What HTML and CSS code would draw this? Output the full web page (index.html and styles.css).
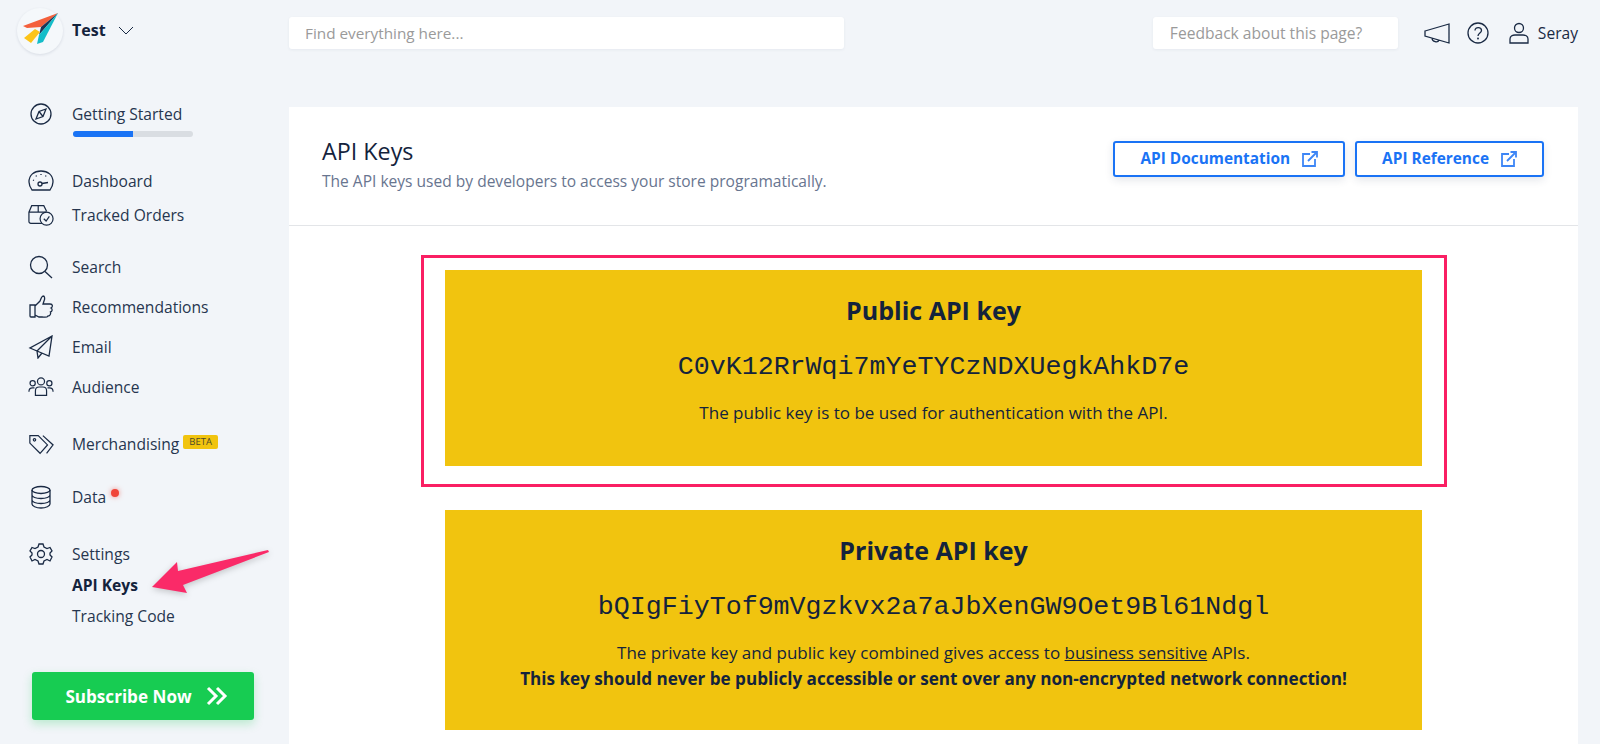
FILE: index.html
```html
<!doctype html>
<html>
<head>
  <title>API Keys</title>
  <link rel="stylesheet" href="styles.css">
</head>
<body>
  <header class="topbar">
    <div class="brand">
      <div class="logo">
        <svg width="38" height="38" viewBox="0 0 38 38">
          <path d="M2 14 L37 1 L20 15 L6 16 Z" fill="#f4603c"/>
          <path d="M37 1 L20 15 L18 23 Z" fill="#1d3557"/>
          <path d="M37 1 L18 23 L16 32 L22 30 Z" fill="#14bdc9"/>
          <path d="M3 26 L14 17 L19 20 L10 31 Z" fill="#fcc419"/>
        </svg>
      </div>
      <span class="brand-name">Test</span>
      <svg class="chevron" width="16" height="9" viewBox="0 0 16 9"><path d="M1 1 L8 8 L15 1"/></svg>
    </div>
    <div class="search-box">Find everything here...</div>
    <div class="top-right">
      <div class="feedback-box">Feedback about this page?</div>
      <svg class="ico mega" width="26" height="21" viewBox="0 0 26 21">
        <path d="M1 8 L25 1 V20 L1 13 Z M1 8 V13 M8 15 C8 19 14 20 15 17"/>
      </svg>
      <svg class="ico help" width="22" height="22" viewBox="0 0 22 22">
        <circle cx="11" cy="11" r="10"/>
        <path d="M8 8.500 C8 4.500 14.500 5 14.500 8.500 C14.500 11 11 11 11 14"/>
        <circle cx="11" cy="16.500" r="0.400"/>
      </svg>
      <div class="user">
        <svg class="ico" width="20" height="22" viewBox="0 0 20 22">
          <circle cx="10" cy="6" r="4.500"/>
          <path d="M1 21 V17 C1 14 4 13 6 13 H14 C16 13 19 14 19 17 V21 Z"/>
        </svg>
        <span>Seray</span>
      </div>
    </div>
  </header>

  <div class="layout">
    <aside class="sidebar">
      <nav class="side-group first">
        <a class="side-item">
          <svg class="ico side-ico" width="26" height="24" viewBox="0 0 26 24">
            <circle cx="13" cy="12" r="10"/>
            <path d="M18 7 L15 14.500 L8 17 L11 9.500 Z M11 9.500 L15 14.500"/>
          </svg>
          Getting Started
        </a>
        <div class="progress"><div class="progress-fill"></div></div>
      </nav>

      <nav class="side-group tight">
        <a class="side-item">
          <svg class="ico side-ico" width="26" height="24" viewBox="0 0 26 24">
            <path d="M4 21 C2 18 1 16 1 13 C1 6 6 2 13 2 C20 2 25 6 25 13 C25 16 24 18 22 21 Z"/>
            <circle cx="12" cy="15" r="2"/>
            <path d="M14 14.500 L20 13.500 M5 11 L6 11.500 M8 6.500 L8.500 7.500 M13 5 V6 M18 6.500 L17.500 7.500"/>
          </svg>
          Dashboard
        </a>
        <a class="side-item">
          <svg class="ico side-ico" width="28" height="24" viewBox="0 0 28 24">
            <path d="M15 21 H3 C2 21 1 20 1 19 V9 L4 2 H17 L20 8 M1 9 H20 M11 2 V9"/>
            <circle cx="20" cy="16" r="7"/>
            <path d="M17 16 L19.500 18.500 L23 13.500"/>
          </svg>
          Tracked Orders
        </a>
      </nav>

      <nav class="side-group after-tight">
        <a class="side-item">
          <svg class="ico side-ico" width="26" height="24" viewBox="0 0 26 24">
            <circle cx="11" cy="10" r="8.500"/>
            <path d="M17 16.500 L24 23"/>
          </svg>
          Search
        </a>
        <a class="side-item">
          <svg class="ico side-ico" width="26" height="24" viewBox="0 0 26 24">
            <path d="M2 10 H7 V22 H3 C2 22 2 21 2 21 Z M7 11 L12 6 C13 4 13 2 15 1 C17 1 17 4 16 6 L15 9 H22 C25 9 25 12 23 13 C25 14 24 17 22.500 17 C23 19 22 21 20 21 C19 23 16 22 14 22 H11 L7 20"/>
          </svg>
          Recommendations
        </a>
        <a class="side-item">
          <svg class="ico side-ico" width="26" height="24" viewBox="0 0 26 24">
            <path d="M24 1 L2 13 L9 16 L21 21 Z M24 1 L9 16 L10 23 L14 18"/>
          </svg>
          Email
        </a>
        <a class="side-item">
          <svg class="ico side-ico" width="28" height="22" viewBox="0 0 28 22">
            <circle cx="14" cy="5" r="3.800"/>
            <circle cx="5" cy="7" r="2.800"/>
            <circle cx="23" cy="7" r="2.800"/>
            <path d="M8 20 V15 C8 12 10 11 12 11 H16 C18 11 20 12 20 15 V20 Z M1 16 C1 13 2 12 5 12 H7 M27 16 C27 13 26 12 23 12 H21"/>
          </svg>
          Audience
        </a>
      </nav>

      <nav class="side-group merch-group">
        <a class="side-item">
          <svg class="ico side-ico" width="28" height="24" viewBox="0 0 28 24">
            <path d="M2 3 H11 L21 13 L13 22 L2 11 Z M16 3 L27 13 L20 22"/>
            <circle cx="7" cy="7.500" r="1.300"/>
          </svg>
          <span>Merchandising</span>
          <span class="beta">BETA</span>
        </a>
      </nav>

      <nav class="side-group data-group">
        <a class="side-item">
          <svg class="ico side-ico" width="26" height="24" viewBox="0 0 26 24">
            <ellipse cx="13" cy="5" rx="9" ry="3.500"/>
            <path d="M4 5 V19 C4 21 8 23 13 23 C18 23 22 21 22 19 V5 M4 10 C4 12 8 13.500 13 13.500 C18 13.500 22 12 22 10 M4 15 C4 17 8 18.500 13 18.500 C18 18.500 22 17 22 15"/>
          </svg>
          <span class="dotted">Data<i class="dot"></i></span>
        </a>
      </nav>

      <nav class="side-group settings-group">
        <a class="side-item">
          <svg class="ico side-ico" width="26" height="24" viewBox="0 0 26 24">
            <circle cx="13" cy="12" r="3.500"/>
            <path d="M11 2 H15 L16 5 L19 6.500 L22 5.500 L24 9 L22 11 V13 L24 15 L22 19 L19 17.500 L16 19 L15 22 H11 L10 19 L7 17.500 L4 19 L2 15 L4 13 V11 L2 9 L4 5.500 L7 6.500 L10 5 Z"/>
          </svg>
          Settings
        </a>
        <div class="sub-list">
          <a class="sub-item active">API Keys</a>
          <a class="sub-item">Tracking Code</a>
        </div>
      </nav>

      <a class="subscribe">
        Subscribe Now
        <svg width="22" height="20" viewBox="0 0 22 20"><path d="M2 2 L10 10 L2 18 M11 2 L19 10 L11 18"/></svg>
      </a>
    </aside>

    <main class="card">
      <div class="card-head">
        <div class="card-title">
          <h1>API Keys</h1>
          <p>The API keys used by developers to access your store programatically.</p>
        </div>
        <div class="head-actions">
          <a class="btn">API Documentation
            <svg width="16" height="16" viewBox="0 0 16 16"><path d="M8 3 H1 V15 H13 V8 M6 10 L15 1 M9.500 1 H15 V6.500"/></svg>
          </a>
          <a class="btn">API Reference
            <svg width="16" height="16" viewBox="0 0 16 16"><path d="M8 3 H1 V15 H13 V8 M6 10 L15 1 M9.500 1 H15 V6.500"/></svg>
          </a>
        </div>
      </div>
      <div class="card-body">
        <div class="highlight">
          <section class="key-panel">
            <h2>Public API key</h2>
            <code>C0vK12RrWqi7mYeTYCzNDXUegkAhkD7e</code>
            <p>The public key is to be used for authentication with the API.</p>
          </section>
        </div>
        <section class="key-panel private">
          <h2>Private API key</h2>
          <code>bQIgFiyTof9mVgzkvx2a7aJbXenGW9Oet9Bl61Ndgl</code>
          <p>The private key and public key combined gives access to <u>business sensitive</u> APIs.<br>
          <b>This key should never be publicly accessible or sent over any non-encrypted network connection!</b></p>
        </section>
      </div>
    </main>
  </div>

  <!-- annotation arrow drawn over the sidebar -->
  <svg class="arrow" width="130" height="60" viewBox="0 0 130 60">
    <path d="M118 2 L28 23 L27 14 L2 39 L37 45 L33 37 L119 4 Z"/>
  </svg>
</body>
</html>
```

FILE: styles.css
```css
* {
  box-sizing: border-box;
  margin: 0;
  padding: 0;
}

html, body { height: 100% }

body {
  font-family: "Open Sans", sans-serif;
  font-size: 15.600px;
  color: #1a2a44;
  background: #f2f5f9;
  overflow: hidden;
  position: relative;
}

.ico {
  fill: none;
  stroke: #1a2a44;
  stroke-width: 1.300;
  flex-shrink: 0;
}

/* top bar */
.topbar {
  display: flex;
  align-items: center;
  height: 66px;
  padding-right: 22px;
}

.brand {
  display: flex;
  align-items: center;
  width: 289px;
  margin-top: -5px;
  padding-left: 17px;
}

.logo {
  display: flex;
  align-items: center;
  justify-content: center;
  width: 46px;
  height: 46px;
  border-radius: 50%;
  background: #f5f8fb;
  box-shadow: 0 1px 3px rgba(30, 50, 80, 0.12);
}

.brand-name {
  font-size: 16px;
  font-weight: 700;
  margin: -2px 0 0 9px;
  color: #14233c;
}

.chevron {
  margin-left: 12px;
  fill: none;
  stroke: #1a2a44;
  stroke-width: 1;
}

.search-box,
.feedback-box {
  height: 32px;
  line-height: 33px;
  padding-left: 16px;
  font-size: 15.300px;
  color: #9a9a9a;
  background: #fff;
  border-radius: 3px;
  box-shadow: 0 1px 3px rgba(30, 50, 80, 0.06);
}

.search-box { width: 555px }

.top-right {
  display: flex;
  align-items: center;
  margin-left: auto;
}

.feedback-box {
  width: 245px;
  margin-right: 26px;
  padding-left: 17px;
  font-size: 15.600px;
}

.help { margin-left: 17px }

.user {
  display: flex;
  align-items: center;
  gap: 9px;
  margin-left: 20px;
}

/* sidebar */
.layout {
  display: flex;
  align-items: flex-start;
  padding-top: 41px;
}

.sidebar {
  width: 289px;
  flex-shrink: 0;
  padding-left: 28px;
}

.side-group { margin-top: 18px }
.side-group.first { margin-top: -13px }
.side-group.tight { margin-top: 27px }
.side-group.after-tight { margin-top: 15px }
.side-group.merch-group { margin-top: 17px }
.side-group.data-group { margin-top: 13px }
.side-group.settings-group { margin-top: 17px }

.side-item {
  display: flex;
  align-items: center;
  height: 40px;
  color: #26354f;
}

.tight .side-item { height: 34px }

.side-ico { margin-right: 18px; width: 26px }

.progress {
  width: 120px;
  height: 6px;
  margin: -3px 0 0 45px;
  border-radius: 3px;
  background: #d9dde2;
  overflow: hidden;
}

.progress-fill {
  width: 50%;
  height: 100%;
  background: #1a73f5;
}

.beta {
  font-size: 9.500px;
  line-height: 14px;
  padding: 0 6px;
  margin: -4px 0 0 4px;
  color: #4e4a2a;
  background: #f1c40f;
  border-radius: 2px;
}

.dotted { position: relative }

.dot {
  position: absolute;
  top: 3px;
  right: -13px;
  width: 8px;
  height: 8px;
  border-radius: 50%;
  background: #f04438;
  box-shadow: 0 0 5px rgba(240, 68, 56, 0.6);
}

.sub-list { margin-top: -4px }

.sub-item {
  display: block;
  height: 31px;
  line-height: 31px;
  padding-left: 44px;
  color: #26354f;
}

.sub-item.active {
  font-weight: 700;
  color: #14233c;
}

.subscribe {
  display: flex;
  align-items: center;
  justify-content: center;
  gap: 14px;
  width: 222px;
  height: 48px;
  margin: 40px 0 0 4px;
  padding-left: 7px;
  font-size: 17.100px;
  font-weight: 700;
  color: #fff;
  background: #17cc52;
  border-radius: 3px;
  box-shadow: 0 4px 10px rgba(23, 204, 82, 0.25);
}

.subscribe svg {
  fill: none;
  stroke: #fff;
  stroke-width: 3;
}

/* main card */
.card {
  width: 1289px;
  height: 640px;
  background: #fff;
}

.card-head {
  display: flex;
  justify-content: space-between;
  align-items: center;
  height: 119px;
  padding: 0 34px 0 33px;
  border-bottom: 1px solid #e3e5e8;
}

.card-title { margin-bottom: 3px }

h1 {
  font-size: 23.300px;
  font-weight: 400;
  line-height: 30px;
  margin-bottom: 3px;
  color: #14233c;
}

.card-title p {
  font-size: 15.550px;
  line-height: 24px;
  color: #68758f;
}

.head-actions {
  display: flex;
  gap: 10px;
  margin-top: -15px;
}

.btn {
  display: flex;
  align-items: center;
  gap: 12px;
  height: 36px;
  padding: 0 25px;
  font-size: 15.400px;
  font-weight: 700;
  color: #1a73f5;
  border: 2px solid #1a73f5;
  border-radius: 3px;
  box-shadow: 0 3px 8px rgba(30, 50, 80, 0.12);
}

.btn svg {
  fill: none;
  stroke: #3d86f6;
  stroke-width: 1.800;
}

.card-body { padding-top: 29px }

.highlight {
  width: 1026px;
  height: 232px;
  margin-left: 132px;
  padding: 12px 0 0 21px;
  border: 3px solid #fa1f63;
}

.key-panel {
  width: 977px;
  height: 196px;
  padding-top: 24px;
  text-align: center;
  color: #14233c;
  background: #f1c40f;
}

.key-panel.private {
  height: 220px;
  margin: 23px 0 0 156px;
}

h2 {
  font-size: 25px;
  line-height: 32px;
  font-weight: 700;
}

code {
  display: block;
  margin-top: 25px;
  font-family: "Liberation Mono", monospace;
  font-size: 26.650px;
  line-height: 32px;
}

.key-panel p {
  margin-top: 17px;
  font-size: 17px;
  line-height: 26px;
}

.key-panel b { font-size: 17.100px }

.arrow {
  position: absolute;
  left: 150px;
  top: 548px;
  fill: #fa2a68;
  filter: drop-shadow(0 2px 3px rgba(0, 0, 0, 0.2));
}
```
